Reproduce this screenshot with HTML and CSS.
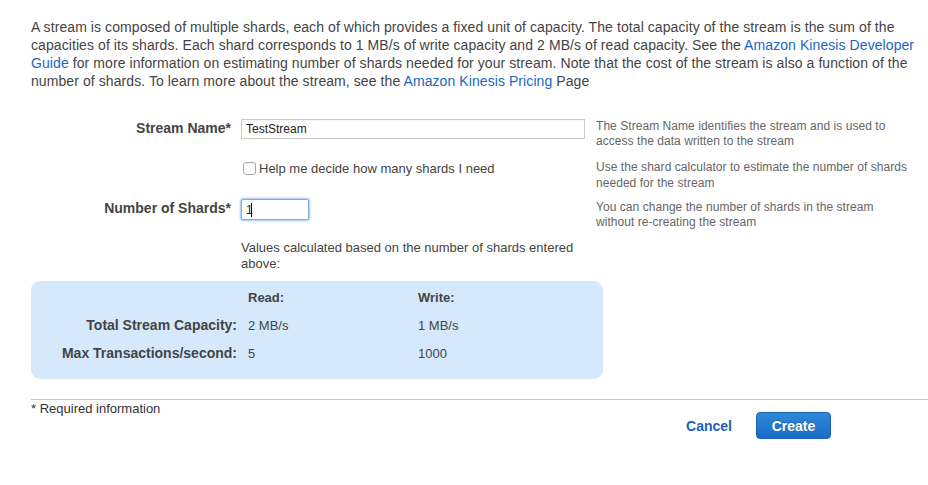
FILE: index.html
```html
<!DOCTYPE html>
<html>
<head>
<meta charset="utf-8">
<link rel="stylesheet" href="styles.css">
</head>
<body>
<div class="page">
  <p class="intro">A stream is composed of multiple shards, each of which provides a fixed unit of capacity. The total capacity of the stream is the sum of the capacities of its shards. Each shard corresponds to 1 MB/s of write capacity and 2 MB/s of read capacity. See the <a href="#">Amazon Kinesis Developer Guide</a> for more information on estimating number of shards needed for your stream. Note that the cost of the stream is also a function of the number of shards. To learn more about the stream, see the <a href="#">Amazon Kinesis Pricing</a> Page</p>

  <div class="form">
    <div class="row row-name">
      <label class="label">Stream Name*</label>
      <div class="field"><input class="text-input name-input" type="text" value="TestStream" readonly></div>
      <div class="help">The Stream Name identifies the stream and is used to access the data written to the stream</div>
    </div>
    <div class="row row-check">
      <div class="label"></div>
      <div class="field"><label class="check"><span class="box"></span>Help me decide how many shards I need</label></div>
      <div class="help">Use the shard calculator to estimate the number of shards needed for the stream</div>
    </div>
    <div class="row row-shards">
      <label class="label">Number of Shards*</label>
      <div class="field"><div class="shard-input">1<span class="caret"></span></div></div>
      <div class="help">You can change the number of shards in the stream without re-creating the stream</div>
    </div>
    <div class="row row-note">
      <div class="label"></div>
      <div class="field note">Values calculated based on the number of shards entered above:</div>
    </div>
  </div>

  <div class="calc">
    <div class="c-label"></div><div class="c-head">Read:</div><div class="c-head">Write:</div>
    <div class="c-label">Total Stream Capacity:</div><div class="c-val">2 MB/s</div><div class="c-val">1 MB/s</div>
    <div class="c-label">Max Transactions/second:</div><div class="c-val">5</div><div class="c-val">1000</div>
  </div>

  <div class="footer">
    <div class="required">* Required information</div>
    <div class="actions">
      <a href="#" class="cancel">Cancel</a>
      <button class="create">Create</button>
    </div>
  </div>
</div>
</body>
</html>
```

FILE: styles.css
```css
html, body {
  margin: 0;
  padding: 0;
  background: #fff;
}
body {
  font-family: "Liberation Sans", Arial, sans-serif;
  color: #444;
}
.page {
  padding: 18px 0 0 31px;
}
.intro {
  margin: 0;
  width: 892px;
  font-size: 14px;
  line-height: 18px;
  letter-spacing: 0.08px;
  color: #444;
}
.intro a {
  color: #1a66c7;
  text-decoration: none;
}
.form {
  margin-top: 29px;
}
.row {
  display: grid;
  grid-template-columns: 200px 344px 318px;
  column-gap: 10px;
  align-items: start;
}
.row .help {
  margin-left: 1px;
}
.label {
  text-align: right;
  font-weight: bold;
  font-size: 14px;
  color: #444;
  line-height: 19px;
}
.help {
  font-size: 12px;
  line-height: 15px;
  letter-spacing: 0.05px;
  color: #666;
}
.text-input {
  box-sizing: border-box;
  width: 344px;
  height: 20px;
  margin: 0;
  border: 1px solid #c9c9c9;
  padding: 0 4px;
  font-family: "Liberation Sans", Arial, sans-serif;
  font-size: 12px;
  color: #222;
  outline: none;
  box-shadow: inset 0 1px 1px rgba(0,0,0,0.05);
}
.row-check {
  margin-top: 10px;
}
.row-check .help {
  line-height: 16px;
}
.check {
  display: flex;
  align-items: center;
  gap: 3px;
  font-size: 13px;
  color: #444;
  padding-left: 2px;
  padding-top: 2px;
}
.box {
  width: 11px;
  height: 11px;
  border: 1px solid #a8a8a8;
  border-radius: 3px;
  background: #fff;
  box-shadow: inset 0 1px 1px rgba(0,0,0,0.06);
}
.row-shards {
  margin-top: 8px;
}
.row-shards .help {
  padding-top: 1px;
}
.shard-input {
  position: relative;
  box-sizing: border-box;
  width: 68px;
  height: 21px;
  border: 1px solid #7aaee6;
  border-radius: 2px;
  box-shadow: 0 0 2px 1px #9cc5f0;
  padding: 3px 0 0 4px;
  font-size: 12px;
  line-height: 14px;
  color: #222;
}
.caret {
  position: absolute;
  left: 9px;
  top: 3px;
  width: 1px;
  height: 14px;
  background: #000;
}
.row-note {
  margin-top: 10px;
}
.note {
  font-size: 13px;
  line-height: 16px;
  color: #444;
}
.calc {
  box-sizing: border-box;
  width: 572px;
  margin-top: 9px;
  background: #d6e9fc;
  border-radius: 9px;
  display: grid;
  grid-template-columns: 206px 159px 1fr;
  grid-auto-rows: 28px;
  column-gap: 11px;
  align-items: center;
  padding: 2px 0 12px 0;
  font-size: 13px;
}
.c-label {
  text-align: right;
  font-weight: bold;
  font-size: 14px;
  color: #444;
}
.c-head {
  font-weight: bold;
  color: #444;
  font-size: 13px;
}
.c-val {
  font-size: 13px;
  color: #444;
}
.footer {
  margin-top: 20px;
  border-top: 1px solid #c8c8c8;
  padding-top: 2px;
  height: 80px;
}
.required {
  font-size: 13px;
  color: #333;
  line-height: 14px;
}
.actions {
  display: flex;
  align-items: center;
  justify-content: flex-end;
  gap: 24px;
  padding-right: 97px;
  margin-top: -4px;
}
.cancel {
  color: #1f5fb8;
  font-weight: bold;
  font-size: 14px;
  text-decoration: none;
}
.create {
  width: 75px;
  height: 27px;
  border: 1px solid #1b62b0;
  border-radius: 4px;
  background: linear-gradient(#2f88db, #1a6cc4);
  color: #fff;
  font-family: "Liberation Sans", Arial, sans-serif;
  font-weight: bold;
  font-size: 14px;
  text-shadow: 0 -1px 0 rgba(0,0,0,0.2);
  padding: 0;
}
```
